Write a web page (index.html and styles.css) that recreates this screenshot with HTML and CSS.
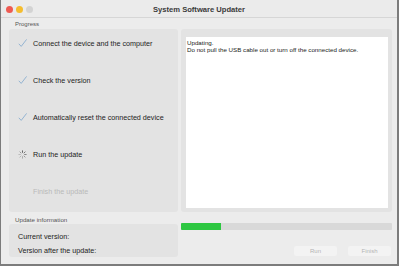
FILE: index.html
```html
<!DOCTYPE html>
<html>
<head>
<meta charset="utf-8">
<link rel="stylesheet" href="styles.css">
</head>
<body>
<div class="window">
  <div class="titlebar">
    <div class="lights">
      <span class="light red"></span>
      <span class="light yellow"></span>
      <span class="light gray"></span>
    </div>
    <div class="title">System Software Updater</div>
  </div>
  <div class="content">
    <div class="label label-top">Progress</div>
    <div class="panel steps">
      <div class="step">
        <svg class="icon" viewBox="0 0 9 8" width="9" height="8"><polyline points="0.8,4.8 3.2,7.4 8.6,0.4" fill="none" stroke="#93b3d1" stroke-width="1"/></svg>
        <span>Connect the device and the computer</span>
      </div>
      <div class="step">
        <svg class="icon" viewBox="0 0 9 8" width="9" height="8"><polyline points="0.8,4.8 3.2,7.4 8.6,0.4" fill="none" stroke="#93b3d1" stroke-width="1"/></svg>
        <span>Check the version</span>
      </div>
      <div class="step">
        <svg class="icon" viewBox="0 0 9 8" width="9" height="8"><polyline points="0.8,4.8 3.2,7.4 8.6,0.4" fill="none" stroke="#93b3d1" stroke-width="1"/></svg>
        <span>Automatically reset the connected device</span>
      </div>
      <div class="step">
        <svg class="icon" viewBox="0 0 9 9" width="9" height="9">
          <g stroke-width="1" stroke-linecap="round">
            <line x1="4.5" y1="0.8" x2="4.5" y2="2.4" stroke="#666"/>
            <line x1="7.1" y1="1.9" x2="6" y2="3" stroke="#777"/>
            <line x1="8.2" y1="4.5" x2="6.6" y2="4.5" stroke="#888"/>
            <line x1="7.1" y1="7.1" x2="6" y2="6" stroke="#999"/>
            <line x1="4.5" y1="8.2" x2="4.5" y2="6.6" stroke="#aaa"/>
            <line x1="1.9" y1="7.1" x2="3" y2="6" stroke="#b3b3b3"/>
            <line x1="0.8" y1="4.5" x2="2.4" y2="4.5" stroke="#bbb"/>
            <line x1="1.9" y1="1.9" x2="3" y2="3" stroke="#999"/>
          </g>
        </svg>
        <span>Run the update</span>
      </div>
      <div class="step pending">
        <span class="icon"></span>
        <span>Finish the update</span>
      </div>
    </div>
    <div class="panel log-panel">
      <div class="log">Updating.<br>Do not pull the USB cable out or turn off the connected device.</div>
    </div>
    <div class="info-col">
      <div class="label label-bottom">Update information</div>
      <div class="panel info">
        <div>Current version:</div>
        <div>Version after the update:</div>
      </div>
    </div>
    <div class="action-col">
      <div class="progress"><div class="fill" style="width:40px"></div></div>
      <div class="buttons">
        <div class="btn">Run</div>
        <div class="btn">Finish</div>
      </div>
    </div>
  </div>
</div>
</body>
</html>
```

FILE: styles.css
```css
* { box-sizing: border-box; }
html, body { margin: 0; padding: 0; background: #ffffff; }
body {
  font-family: "Liberation Sans", Arial, sans-serif;
  color: #222;
}
.window {
  width: 399px;
  height: 266px;
  background: #ececec;
  border: 2px solid #7c7c7c;
  border-top: none;
  border-left-width: 1px;
  display: flex;
  flex-direction: column;
}
.titlebar {
  height: 18px;
  flex: none;
  position: relative;
  background: #ebebeb;
  border-bottom: 1px solid #d6d6d6;
  display: flex;
  align-items: center;
  justify-content: center;
}
.lights {
  position: absolute;
  left: 5px;
  top: 6px;
  display: flex;
  gap: 3px;
}
.light {
  width: 7px;
  height: 7px;
  border-radius: 50%;
  display: block;
}
.red { background: #ee5a52; }
.yellow { background: #f5bd2e; }
.gray { background: #d3d3d3; }
.title {
  font-weight: bold;
  font-size: 7.6px;
  color: #3a3a3a;
  padding-top: 2px;
}
.content {
  display: grid;
  grid-template-columns: 169px 211px;
  grid-template-rows: 11px 183px auto;
  column-gap: 3px;
  padding: 0 4px 0 8px;
}
.label {
  font-size: 6px;
  color: #555;
  padding-left: 6px;
}
.label-top {
  grid-column: 1 / -1;
  line-height: 11px;
  padding-top: 1px;
}
.panel {
  background: #e3e3e3;
  border-radius: 3px;
}
.steps {
  padding: 9px 0 0 9px;
  display: flex;
  flex-direction: column;
  gap: 27px;
}
.step {
  height: 10px;
  display: flex;
  align-items: center;
  gap: 6px;
  font-size: 7.2px;
  color: #222;
}
.step .icon {
  width: 9px;
  flex: none;
}
.step.pending { color: #b9b9b9; }
.log-panel {
  padding: 8px 4px 4px 5px;
}
.log {
  height: 100%;
  background: #ffffff;
  font-size: 6.2px;
  line-height: 7px;
  color: #222;
  padding: 1.5px 1px;
}
.label-bottom {
  height: 12px;
  padding-top: 4px;
  line-height: 8px;
  font-size: 6.2px;
}
.info {
  height: 33px;
  padding: 6px 9px 0 9px;
  font-size: 7.2px;
  line-height: 13.5px;
  color: #222;
}
.action-col {
  padding-top: 11px;
}
.progress {
  height: 7px;
  background: #d9d9d9;
  border-radius: 1px;
  overflow: hidden;
}
.fill {
  height: 100%;
  background: #2dc741;
}
.buttons {
  display: flex;
  justify-content: flex-end;
  gap: 11px;
  margin-top: 16px;
  padding-right: 1px;
}
.btn {
  width: 43px;
  height: 10px;
  background: #f3f3f3;
  border-radius: 2px;
  font-size: 6px;
  line-height: 10px;
  text-align: center;
  color: #b3b3b3;
}
```
